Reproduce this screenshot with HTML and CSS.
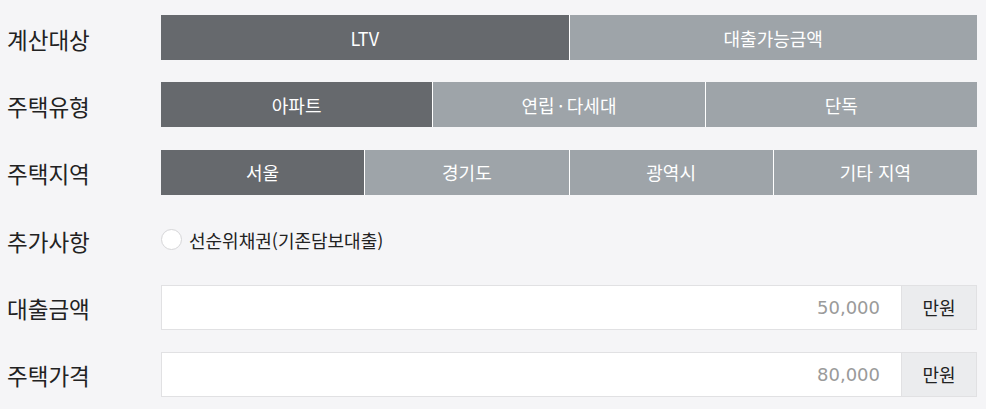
FILE: index.html
```html
<!DOCTYPE html>
<html lang="ko">
<head>
<meta charset="utf-8">
<link rel="stylesheet" href="styles.css">
</head>
<body>
<div class="form">
  <div class="label">계산대상</div>
  <div class="seg">
    <div class="opt on">LTV</div>
    <div class="opt">대출가능금액</div>
  </div>

  <div class="label">주택유형</div>
  <div class="seg">
    <div class="opt on">아파트</div>
    <div class="opt">연립&#8201;·&#8201;다세대</div>
    <div class="opt">단독</div>
  </div>

  <div class="label">주택지역</div>
  <div class="seg">
    <div class="opt on">서울</div>
    <div class="opt">경기도</div>
    <div class="opt">광역시</div>
    <div class="opt">기타 지역</div>
  </div>

  <div class="label">추가사항</div>
  <div class="check">
    <span class="radio"></span>
    <span class="check-text">선순위채권(기존담보대출)</span>
  </div>

  <div class="label">대출금액</div>
  <div class="field">
    <div class="input">50,000</div>
    <div class="unit">만원</div>
  </div>

  <div class="label">주택가격</div>
  <div class="field">
    <div class="input">80,000</div>
    <div class="unit">만원</div>
  </div>
</div>
</body>
</html>
```
FILE: styles.css
```css
html, body {
  margin: 0;
  padding: 0;
  background: #f5f5f7;
}
body {
  font-family: "Noto Sans CJK KR", "Noto Sans", sans-serif;
  color: #222;
}
.form {
  display: grid;
  grid-template-columns: 154px 816px;
  grid-auto-rows: 45px;
  row-gap: 22.4px;
  padding: 15px 0 0 7px;
}
.label {
  display: flex;
  align-items: center;
  font-size: 22.5px;
  color: #222;
  padding-top: 2px;
}
.seg {
  display: flex;
}
.opt {
  flex: 1;
  display: flex;
  align-items: center;
  justify-content: center;
  background: #9ea4a9;
  color: #fff;
  font-size: 18px;
  white-space: pre;
}
.opt + .opt {
  border-left: 1px solid #fff;
}
.opt.on {
  background: #66696d;
}
.check {
  display: flex;
  align-items: center;
}
.radio {
  width: 19px;
  height: 19px;
  border: 1px solid #d6d6d8;
  border-radius: 50%;
  background: #fff;
  margin-right: 7px;
}
.check-text {
  font-size: 18px;
  color: #222;
}
.field {
  display: flex;
}
.input {
  flex: 1;
  display: flex;
  align-items: center;
  justify-content: flex-end;
  background: #fff;
  border: 1px solid #e1e1e3;
  border-right: none;
  padding-right: 21px;
  font-family: "DejaVu Sans", sans-serif;
  font-size: 18px;
  color: #9a9a9a;
}
.unit {
  width: 74px;
  display: flex;
  align-items: center;
  justify-content: center;
  background: #ebecee;
  border: 1px solid #e1e1e3;
  font-size: 18px;
  color: #222;
}
```
